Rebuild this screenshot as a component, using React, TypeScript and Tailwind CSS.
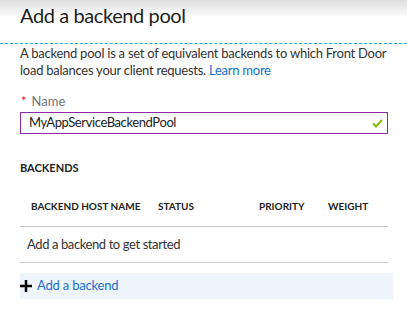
import React from 'react';

const font = { fontFamily: 'Lato, "Liberation Sans", sans-serif' };

export default function App() {
  return (
    <div className="w-[407px] h-[313px] bg-white overflow-hidden text-[#333]" style={font}>
      {/* header */}
      <div className="h-[43px] bg-gradient-to-b from-[#dcdcdc] via-white via-40% to-white px-[20px] pt-[2px]">
        <h1 className="text-[20px] leading-[26px] tracking-[-0.4px] text-[#1e1e1e] font-normal">Add a backend pool</h1>
      </div>
      <div className="border-t border-dashed border-[#1bb4ea]" />

      <div className="px-[20px]">
        <p className="text-[13px] leading-[17px] mt-[1px] tracking-[-0.25px] text-[#333] whitespace-nowrap">
          A backend pool is a set of equivalent backends to which Front Door
          <br />
          load balances your client requests. <span className="text-[#0f6fd6]">Learn more</span>
        </p>

        <div className="mt-[14px] flex items-center gap-[5px] text-[13px] leading-[16px]">
          <span className="text-[#e81123] text-[13px] pl-[1px]">*</span>
          <span className="text-[#737373]">Name</span>
        </div>
        <div className="mt-[3px] h-[22px] w-[368px] border border-[#8a2ba8] flex items-center justify-between pl-[8px] pr-[4px]">
          <span className="text-[13px] tracking-[-0.4px] text-[#222]">MyAppServiceBackendPool</span>
          <svg width="11" height="9" viewBox="0 0 11 9">
            <path d="M1 4.5 L4 7.5 L10 1" fill="none" stroke="#7fba00" strokeWidth="2" />
          </svg>
        </div>

        <div className="mt-[27px] text-[11px] font-bold text-[#222] leading-[14px]">BACKENDS</div>

        <div className="mt-[24px] w-[368px]">
          <div className="flex text-[10px] font-bold text-[#222] leading-[14px] pb-[13px] border-b border-[#ccc]">
            <span className="w-[138px] pl-[11px]">BACKEND HOST NAME</span>
            <span className="w-[101px]">STATUS</span>
            <span className="w-[69px]">PRIORITY</span>
            <span>WEIGHT</span>
          </div>
          <div className="h-[36px] flex items-center pl-[7px] text-[13px] tracking-[-0.4px] text-[#333] border-b border-[#ccc]">
            Add a backend to get started
          </div>
        </div>

        <div className="mt-[10px] w-[373px] h-[26px] bg-[#eef5fd] flex items-center gap-[5px] text-[13px] tracking-[-0.2px] text-[#1c6fd1]">
          <svg width="12" height="12" viewBox="0 0 12 12">
            <path d="M6 0 V12 M0 6 H12" stroke="#000" strokeWidth="2.5" />
          </svg>
          <span>Add a backend</span>
        </div>
      </div>
    </div>
  );
}
